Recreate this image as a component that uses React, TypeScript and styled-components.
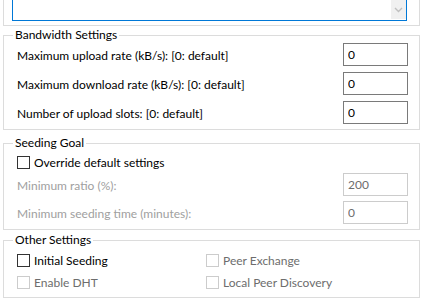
import styled, { createGlobalStyle } from 'styled-components';

const GlobalStyle = createGlobalStyle`
  html, body {
    margin: 0;
    padding: 0;
    background: #fff;
    overflow: hidden;
  }
  body {
    font-family: Lato, "Noto Sans", sans-serif;
    font-size: 12px;
    color: #000;
  }
`;

const Page = styled.div`
  display: flex;
  flex-direction: column;
  width: 423px;
  height: 307px;
  box-sizing: border-box;
  padding: 0 3px;
`;

const TopGroup = styled.div`
  height: 26px;
  box-sizing: border-box;
  border: 1px solid #dcdcdc;
  border-top: none;
  padding: 0 12px 0 8px;
`;

const ListBox = styled.div`
  display: flex;
  justify-content: flex-end;
  align-items: flex-start;
  height: 21px;
  box-sizing: border-box;
  border: 1px solid #0078d7;
  border-top: none;
  background: #fff;
`;

const ScrollArea = styled.div`
  display: flex;
  align-items: center;
  justify-content: center;
  width: 15px;
  height: 19px;
  background: #f0f0f0;
`;

const Group = styled.fieldset<{ $top: number }>`
  margin: ${(p) => p.$top}px 0 0 0;
  min-width: 0;
  border: 1px solid #dcdcdc;
  padding: 0 11px ${(p) => (p.$top === 2 ? 7 : 5)}px 13px;
`;

const Legend = styled.legend`
  margin-left: -4px;
  padding: 0 2px;
  line-height: 16px;
  font-size: 12px;
`;

const Rows = styled.div<{ $gap: number; $top: number }>`
  display: flex;
  flex-direction: column;
  gap: ${(p) => p.$gap}px;
  margin-top: ${(p) => p.$top}px;
`;

const FieldRow = styled.div`
  display: flex;
  align-items: center;
  justify-content: space-between;
  height: 23px;
`;

const Label = styled.span<{ $disabled?: boolean }>`
  color: ${(p) => (p.$disabled ? '#a0a0a0' : '#000')};
  line-height: 16px;
  padding-top: 2px;
`;

const NumberBox = styled.input<{ $disabled?: boolean }>`
  width: 65px;
  height: 23px;
  box-sizing: border-box;
  margin: 0;
  padding: 0 0 0 4px;
  border: 1px solid ${(p) => (p.$disabled ? '#cccccc' : '#7a7a7a')};
  border-radius: 0;
  outline: none;
  background: #fff;
  font-family: inherit;
  font-size: 12px;
  color: ${(p) => (p.$disabled ? '#6d6d6d' : '#000')};
`;

const CheckRow = styled.label<{ $disabled?: boolean }>`
  display: flex;
  align-items: center;
  height: 16px;
  color: ${(p) => (p.$disabled ? '#6d6d6d' : '#000')};
`;

const Box = styled.span<{ $disabled?: boolean }>`
  width: 13px;
  height: 13px;
  box-sizing: border-box;
  border: 1px solid ${(p) => (p.$disabled ? '#cccccc' : '#333333')};
  background: #fff;
  margin-right: 4px;
  flex: none;
`;

const CheckGrid = styled.div`
  display: grid;
  grid-template-columns: 189px 1fr;
  row-gap: 6px;
  margin-top: 4px;
`;

const Check = ({ text, disabled }: { text: string; disabled?: boolean }) => (
  <CheckRow $disabled={disabled}>
    <Box $disabled={disabled} />
    {text}
  </CheckRow>
);

const Field = ({ text, value, disabled }: { text: string; value: string; disabled?: boolean }) => (
  <FieldRow>
    <Label $disabled={disabled}>{text}</Label>
    <NumberBox $disabled={disabled} value={value} readOnly />
  </FieldRow>
);

const App = () => {
  return (
    <>
      <GlobalStyle />
      <Page>
        <TopGroup>
          <ListBox>
            <ScrollArea>
              <svg width="9" height="6" viewBox="0 0 9 6">
                <path d="M1 1 L4.5 4.5 L8 1" fill="none" stroke="#bfbfbf" strokeWidth="1.4" />
              </svg>
            </ScrollArea>
          </ListBox>
        </TopGroup>

        <Group $top={1}>
          <Legend>Bandwidth Settings</Legend>
          <Rows $gap={6} $top={0}>
            <Field text="Maximum upload rate (kB/s): [0: default]" value="0" />
            <Field text="Maximum download rate (kB/s): [0: default]" value="0" />
            <Field text="Number of upload slots: [0: default]" value="0" />
          </Rows>
        </Group>

        <Group $top={5}>
          <Legend>Seeding Goal</Legend>
          <Rows $gap={3} $top={3}>
            <Check text="Override default settings" />
            <Rows $gap={5} $top={0}>
              <Field text="Minimum ratio (%):" value="200" disabled />
              <Field text="Minimum seeding time (minutes):" value="0" disabled />
            </Rows>
          </Rows>
        </Group>

        <Group $top={2}>
          <Legend>Other Settings</Legend>
          <CheckGrid>
            <Check text="Initial Seeding" />
            <Check text="Peer Exchange" disabled />
            <Check text="Enable DHT" disabled />
            <Check text="Local Peer Discovery" disabled />
          </CheckGrid>
        </Group>
      </Page>
    </>
  );
};

export default App;
